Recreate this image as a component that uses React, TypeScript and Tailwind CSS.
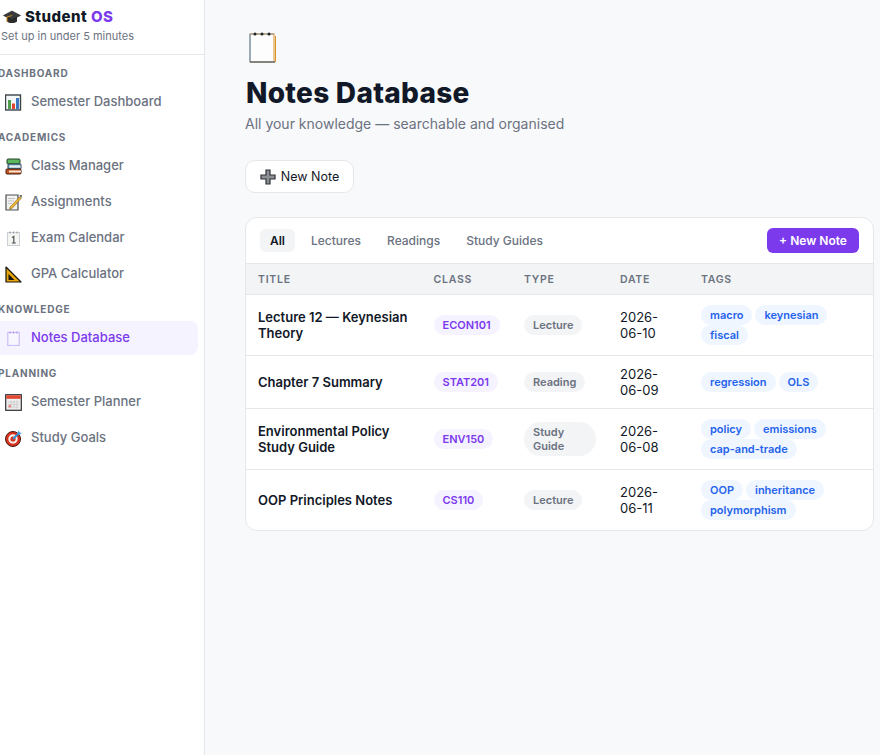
import type { ReactNode } from 'react'

function Svg({ children, w = 17, h = 17, vb = '0 0 17 17' }: { children: ReactNode; w?: number; h?: number; vb?: string }) {
  return <svg width={w} height={h} viewBox={vb} className="block shrink-0">{children}</svg>
}

const CapIcon = () => (
  <Svg w={18} h={14} vb="0 0 18 14">
    <path d="M4 6h10v5.500c-2.500 2-7.500 2-10 0z" fill="#2b2b2b" />
    <path d="M9 1 17.500 5.500 9 9.500 .5 5.500z" fill="#3a3a3a" stroke="#1a1a1a" strokeWidth=".6" />
    <path d="M9 5.500 4 7v5" fill="none" stroke="#c98a1b" strokeWidth="1" />
  </Svg>
)
const ChartIcon = () => (
  <Svg>
    <rect x=".5" y="1" width="15" height="15" fill="#f4f7f7" stroke="#39424a" strokeWidth="1.400" />
    <rect x="3" y="6" width="3" height="9" fill="#4f9e4b" />
    <rect x="7" y="9.500" width="3" height="5.500" fill="#e2452f" />
    <rect x="11" y="4" width="3" height="11" fill="#3a78c2" />
  </Svg>
)
const BooksIcon = () => (
  <Svg>
    <rect x="2" y="1" width="13" height="5" rx="1" fill="#5cb85c" stroke="#26432a" />
    <rect x="3" y="6" width="13" height="5" rx="1" fill="#7ab6df" stroke="#2d3b48" />
    <rect x="4.500" y="7.500" width="11" height="2" fill="#f1efe6" />
    <rect x="1" y="11" width="15" height="5" rx="1" fill="#c8531c" stroke="#3d2012" />
    <rect x="4" y="12.500" width="12" height="2" fill="#f3e3cf" />
  </Svg>
)
const MemoIcon = () => (
  <Svg>
    <path d="M1 1h12v15H1z" fill="#f3f3ef" stroke="#4b4f54" strokeWidth="1.200" />
    <path d="M3 4.500h7M3 7h6M3 9.500h4" stroke="#b9bdc0" strokeWidth=".9" />
    <path d="M5 13 15 2.500l1.500 1.500L7 14.500l-2.500.8z" fill="#f2b632" stroke="#5d4a1c" strokeWidth=".5" />
    <path d="M14.300 1.500 16.800 1l-.2 2.500z" fill="#38424a" />
  </Svg>
)
const CalendarIcon = () => (
  <svg width="13" height="15" viewBox="0 0 13 15" className="block shrink-0">
    <rect x=".5" y="1.500" width="12" height="13" fill="#f5f6f2" stroke="#c9cfd4" />
    <path d="M3 .5v2M6.500 .5v2M10 .5v2" stroke="#8d9399" />
    <path d="M5 6.500 6.800 5.500V12M4.800 12h4" fill="none" stroke="#4a4f55" strokeWidth="1.200" />
  </svg>
)
const RulerIcon = () => (
  <Svg>
    <path d="M1 1 16 16H1z" fill="#e9a50c" stroke="#16130a" strokeWidth="1.200" strokeLinejoin="round" />
    <path d="M3.500 8 9.500 14H3.500z" fill="#16130a" />
  </Svg>
)
const NotesIconSmall = () => (
  <svg width="13" height="15" viewBox="0 0 13 15" className="block shrink-0">
    <rect x=".8" y="1.500" width="11.400" height="13" fill="#f8f6ff" stroke="#cdbdf5" strokeWidth="1.200" />
    <path d="M3 .5v2M6.500 .5v2M10 .5v2" stroke="#a892ea" />
  </svg>
)
const PlannerIcon = () => (
  <Svg>
    <rect x=".7" y=".7" width="15.600" height="15.600" fill="#eeeeee" stroke="#2e3135" strokeWidth="1.200" />
    <rect x="1.300" y="1.300" width="14.400" height="3.500" fill="#e2472f" />
    <path d="M3 8h11M3 10.500h11M3 13h11M6 6.500v8M9 6.500v8M12 6.500v8" stroke="#c9c9c9" strokeWidth=".8" />
    <rect x="3.500" y="11" width="2.500" height="2.500" fill="#e68a7b" />
  </Svg>
)
const TargetIcon = () => (
  <Svg>
    <circle cx="8" cy="9" r="7.500" fill="#d8321f" stroke="#4a1a14" strokeWidth="1" />
    <circle cx="8" cy="9" r="4.700" fill="#f7efe9" />
    <circle cx="8" cy="9" r="2.600" fill="#d8321f" />
    <path d="M8 9 14.500 2.500" stroke="#2f8fd6" strokeWidth="2" />
    <path d="M13 1.500 14 .5l.5 2 2 .5-1.500 1.500-2-.5z" fill="#3fa2e4" />
  </Svg>
)

const nav = [
  { label: 'DASHBOARD', items: [{ icon: <ChartIcon />, name: 'Semester Dashboard' }] },
  { label: 'ACADEMICS', items: [{ icon: <BooksIcon />, name: 'Class Manager' }, { icon: <MemoIcon />, name: 'Assignments' }, { icon: <CalendarIcon />, name: 'Exam Calendar' }, { icon: <RulerIcon />, name: 'GPA Calculator' }] },
  { label: 'KNOWLEDGE', items: [{ icon: <NotesIconSmall />, name: 'Notes Database', active: true }] },
  { label: 'PLANNING', items: [{ icon: <PlannerIcon />, name: 'Semester Planner' }, { icon: <TargetIcon />, name: 'Study Goals' }] },
]

const notes = [
  { title: 'Lecture 12 — Keynesian Theory', cls: 'ECON101', type: 'Lecture', date: '2026-06-10', tags: ['macro', 'keynesian', 'fiscal'] },
  { title: 'Chapter 7 Summary', cls: 'STAT201', type: 'Reading', date: '2026-06-09', tags: ['regression', 'OLS'] },
  { title: 'Environmental Policy Study Guide', cls: 'ENV150', type: 'Study Guide', date: '2026-06-08', tags: ['policy', 'emissions', 'cap-and-trade'] },
  { title: 'OOP Principles Notes', cls: 'CS110', type: 'Lecture', date: '2026-06-11', tags: ['OOP', 'inheritance', 'polymorphism'] },
]

function Sidebar() {
  return (
    <aside className="w-[205px] shrink-0 min-h-[755px] bg-white border-r border-[#e5e7eb] overflow-hidden">
      <div className="-ml-[7px] w-[212px]">
        <div className="h-[55px] pl-[10px] pt-[7px] border-b border-[#e5e7eb]">
          <div className="flex items-center gap-[4px] text-[15px] leading-[20px] font-extrabold tracking-[0.03em] text-[#111827]">
            <CapIcon />
            <span>Student <span className="text-[#7c3aed]">OS</span></span>
          </div>
          <div className="-ml-[2px] text-[11px] leading-[14px] mt-[2px] text-[#6b7280]">Set up in under 5 minutes</div>
        </div>
        <nav className="pr-[7px] pt-[11px]">
          {nav.map((s) => (
            <div key={s.label} className="mb-[2px]">
              <div className="h-[14px] leading-[14px] mb-[5px] text-[10px] font-bold tracking-[0.08em] text-[#6b7280] pl-[5px]">{s.label}</div>
              <div className="pb-[7px]">
                {s.items.map((it) => (
                  <div key={it.name} className={`h-[34px] mb-[2px] flex items-center pl-[12px] rounded-lg text-[13px] font-medium ${it.active ? 'bg-[#f5f3ff] text-[#7c3aed]' : 'text-[#6b7280]'}`}>
                    <span className="w-[17px] mr-[9px] flex justify-center">{it.icon}</span>
                    {it.name}
                  </div>
                ))}
              </div>
            </div>
          ))}
        </nav>
      </div>
    </aside>
  )
}

export default function App() {
  return (
    <div className="flex min-h-[755px] overflow-hidden bg-[#f8f9fb] font-['Inter',sans-serif]">
      <Sidebar />
      <main className="pl-[40px] pt-[28px] w-[669px] shrink-0">
        <div className="h-[36px] pl-[4px] pt-[4px]">
          <svg width="28" height="31" viewBox="0 0 28 31" className="block">
            <rect x="1" y="2" width="24" height="28" fill="#fdfdfd" stroke="#d9912a" strokeWidth="1" />
            <path d="M1 2v28" stroke="#4a90d9" strokeWidth="1" />
            <path d="M26.500 4v26" stroke="#d9912a" strokeWidth="1" />
            <path d="M1 30h25" stroke="#6b7075" strokeWidth="1.600" />
            <path d="M1 2h24" stroke="#8a8f94" strokeWidth="1" />
            <circle cx="6" cy="2" r="1.500" fill="#1f2329" />
            <circle cx="13" cy="2" r="1.500" fill="#1f2329" />
            <circle cx="20" cy="2" r="1.500" fill="#1f2329" />
          </svg>
        </div>
        <h1 className="mt-[12px] pl-[1px] text-[28px] leading-[34px] font-extrabold tracking-[0.01em] text-[#111827]">Notes Database</h1>
        <p className="mt-[4px] text-[14px] leading-[20px] text-[#6b7280]">All your knowledge — searchable and organised</p>
        <button className="mt-[26px] h-[33px] w-[109px] flex items-center justify-center gap-[5px] rounded-[10px] bg-white border border-[#e5e7eb] text-[12.500px] font-normal text-[#111827]">
          <svg width="16" height="16" viewBox="0 0 16 16" className="block shrink-0">
            <path d="M6 1h4v5h5v4h-5v5H6v-5H1V6h5z" fill="#8c9094" stroke="#2d3035" strokeWidth="1.200" />
          </svg>
          <span className="pt-[2px]">New Note</span>
        </button>
        <div className="mt-[24px] w-[629px] bg-white border border-[#e5e7eb] rounded-xl overflow-hidden">
          <div className="h-[46px] flex items-center pl-[14px] pr-[14px] border-b border-[#e5e7eb]">
            <div className="flex items-center gap-[5px] text-[12px] font-medium text-[#6b7280]">
              <span className="h-[23px] px-[10px] flex items-center rounded-md bg-[#f3f4f6] text-[#111827] font-semibold">All</span>
              <span className="h-[23px] px-[10px] flex items-center ml-[1px]">Lectures</span>
              <span className="h-[23px] px-[10px] flex items-center ml-[1px]">Readings</span>
              <span className="h-[23px] px-[10px] flex items-center ml-[1px]">Study Guides</span>
            </div>
            <button className="ml-auto h-[25px] w-[92px] rounded-md bg-[#7c3aed] text-white text-[12px] font-semibold">+ New Note</button>
          </div>
          <table className="w-full table-fixed border-collapse">
            <colgroup>
              <col className="w-[175.500px]" />
              <col className="w-[90.500px]" />
              <col className="w-[96px]" />
              <col className="w-[81px]" />
              <col />
            </colgroup>
            <thead>
              <tr className="h-[30px] bg-[#f3f4f6] border-b border-[#e5e7eb] text-left text-[10.500px] tracking-[0.07em] text-[#6b7280]">
                <th className="pl-[12px] pt-[3px] font-semibold">TITLE</th>
                <th className="pl-[12px] pt-[3px] font-semibold">CLASS</th>
                <th className="pl-[12px] pt-[3px] font-semibold">TYPE</th>
                <th className="pl-[12px] pt-[3px] font-semibold">DATE</th>
                <th className="pl-[12px] pt-[3px] font-semibold">TAGS</th>
              </tr>
            </thead>
            <tbody>
              {notes.map((n, i) => (
                <tr key={n.title} className={i < notes.length - 1 ? 'border-b border-[#e5e7eb]' : ''}>
                  <td className="pl-[12px] pr-[12px] py-[10px] text-[13px] leading-[16px] font-semibold text-[#111827]">{n.title}</td>
                  <td className="pl-[12px] py-[10px]"><span className="block w-fit px-[9px] rounded-full bg-[#f5f3ff] text-[#7c3aed] text-[11px] leading-[20px] font-semibold">{n.cls}</span></td>
                  <td className="pl-[12px] pr-[12px] py-[10px]"><span className="block w-fit px-[9px] rounded-[17px] bg-[#f3f4f6] text-[#6b7280] text-[11px] leading-[14px] py-[3px] font-semibold">{n.type}</span></td>
                  <td className="pl-[12px] pr-[12px] py-[10px] text-[13px] leading-[16px] text-[#111827]">{n.date}</td>
                  <td className="pl-[12px] pr-[40px] py-[10px]">
                    <div className="flex flex-wrap gap-x-[3px]">
                      {n.tags.map((t) => (
                        <span key={t} className="px-[9px] rounded-full bg-[#eff6ff] text-[#2563eb] text-[11px] leading-[20px] font-semibold">{t}</span>
                      ))}
                    </div>
                  </td>
                </tr>
              ))}
            </tbody>
          </table>
        </div>
      </main>
    </div>
  )
}
